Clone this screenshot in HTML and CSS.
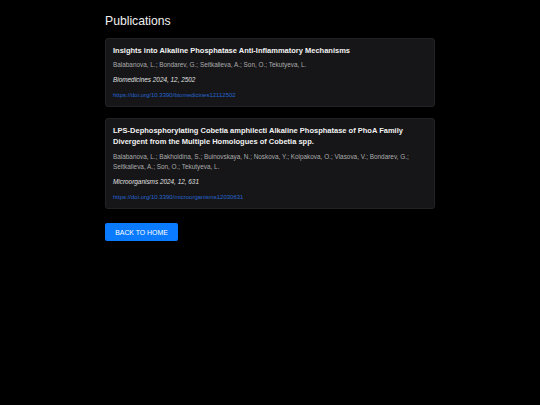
FILE: index.html
```html
<!DOCTYPE html>
<html>
<head>
<meta charset="utf-8">
<link rel="stylesheet" href="styles.css">
</head>
<body>
<main class="page">
  <h1 class="page-title">Publications</h1>
  <article class="card">
    <h2 class="card-title">Insights into Alkaline Phosphatase Anti-Inflammatory Mechanisms</h2>
    <p class="authors">Balabanova, L.; Bondarev, G.; Seitkalieva, A.; Son, O.; Tekutyeva, L.</p>
    <p class="journal">Biomedicines 2024, 12, 2502</p>
    <a class="doi" href="#">https://doi.org/10.3390/biomedicines12112502</a>
  </article>
  <article class="card">
    <h2 class="card-title">LPS-Dephosphorylating Cobetia amphilecti Alkaline Phosphatase of PhoA Family Divergent from the Multiple Homologues of Cobetia spp.</h2>
    <p class="authors">Balabanova, L.; Bakholdina, S.; Buinovskaya, N.; Noskova, Y.; Kolpakova, O.; Vlasova, V.; Bondarev, G.; Seitkalieva, A.; Son, O.; Tekutyeva, L.</p>
    <p class="journal">Microorganisms 2024, 12, 631</p>
    <a class="doi" href="#">https://doi.org/10.3390/microorganisms12030631</a>
  </article>
  <button class="back-btn">BACK TO HOME</button>
</main>
</body>
</html>
```
FILE: styles.css
```css
html, body {
  margin: 0;
  padding: 0;
  background: #000;
}
body {
  font-family: "Liberation Sans", Arial, sans-serif;
  color: #e6e6e6;
}
.page {
  width: 330px;
  margin: 0 auto;
  padding-top: 13px;
  display: flex;
  flex-direction: column;
  align-items: flex-start;
}
.page-title {
  margin: 0 0 9px;
  font-size: 12.2px;
  font-weight: 400;
  line-height: 16px;
  color: #f0f0f0;
}
.card {
  box-sizing: border-box;
  width: 100%;
  background: #161618;
  border: 1px solid #222225;
  border-radius: 3px;
  padding: 5.5px 7px 5.5px;
  margin-bottom: 11px;
  display: flex;
  flex-direction: column;
  align-items: flex-start;
}
.card-title {
  margin: 0 0 4.75px;
  font-size: 7.5px;
  font-weight: 700;
  line-height: 11px;
  color: #f2f2f2;
}
.authors {
  margin: 0 0 4.5px;
  font-size: 6.4px;
  line-height: 10.5px;
  color: #ababab;
}
.journal {
  margin: 0 0 4.5px;
  font-size: 6.4px;
  line-height: 10.5px;
  font-style: italic;
  color: #e0e0e0;
}
.doi {
  font-size: 6px;
  line-height: 10.5px;
  color: #2565cf;
  text-decoration: none;
}
.back-btn {
  margin-top: 3px;
  width: 73px;
  height: 18px;
  border: none;
  border-radius: 2px;
  background: #0a7bff;
  color: #fff;
  font-family: "Liberation Sans", Arial, sans-serif;
  font-size: 6.9px;
  padding: 0;
  cursor: pointer;
}
```
